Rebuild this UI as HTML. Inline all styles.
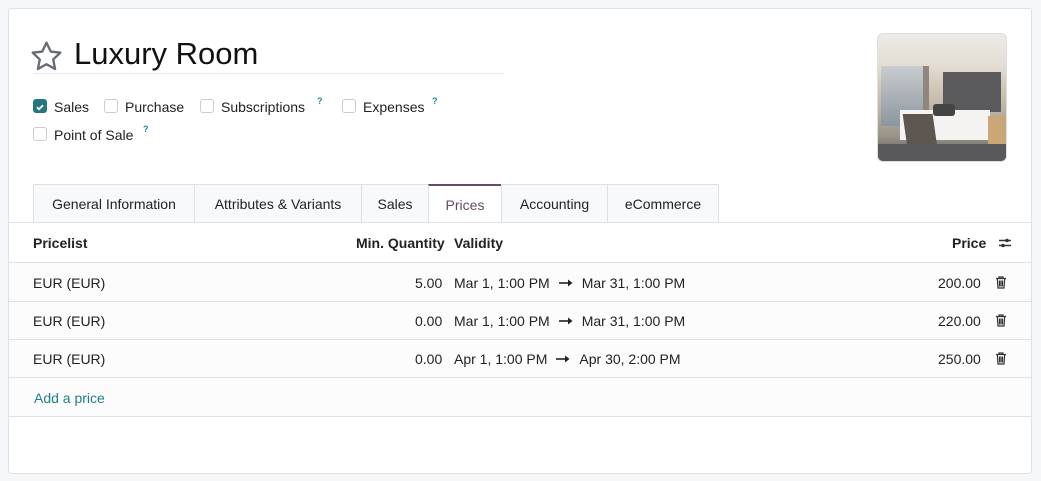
<!DOCTYPE html>
<html><head><style>
*{box-sizing:border-box;margin:0;padding:0}
body{width:1041px;height:481px;background:#f6f7f9;font-family:"Liberation Sans",sans-serif;font-size:14px;color:#212529;position:relative;overflow:hidden}
.card{position:absolute;left:8px;top:8px;width:1024px;height:466px;background:#fff;border:1px solid #dee2e6;border-radius:3px;overflow:hidden}
.in{position:absolute;left:-1px;top:-1px;width:1024px;height:466px}
.abs{position:absolute}
.title{left:66px;top:28px;font-size:31px;color:#111}
.uline{left:25px;top:65px;width:471px;height:1px;background:#e4e6ea}
.cb{position:absolute;width:14px;height:14px;border:1px solid #ccc;border-radius:3px;background:#fff}
.cb.on{background:#24787c;border-color:#24787c}
.lbl{position:absolute;font-size:14px;color:#222}
.q{position:absolute;font-size:9px;color:#1a8aa0;font-weight:bold}
.tabs{left:25px;top:176px;height:39px;width:686px}
.tab{position:absolute;top:0;height:39px;border:1px solid #dee2e6;border-right:none;background:#f8f9fa;font-size:14px;line-height:38px;text-align:center;color:#222}
.tab.act{background:#fff;border-top:2px solid #6b4b63;color:#6b4b63;border-bottom:1px solid #fff}
.hline{position:absolute;left:0;width:1024px;height:1px;background:#dee2e6}
.row{position:absolute;left:0;width:1024px;background:#fcfcfd}
.t{position:absolute;font-size:14px;color:#222}
.b{font-weight:bold}
.ar{display:inline-block;vertical-align:middle;margin:0 9px 2px 9px}
</style></head><body>
<div class="card"><div class="in">
<svg class="abs" style="left:21px;top:31px" width="35" height="35" viewBox="0 0 24 24"><path d="M12 2.5l2.9 6.1 6.6.8-4.9 4.6 1.3 6.6L12 17.3l-5.9 3.3 1.3-6.6-4.9-4.6 6.6-.8z" fill="none" stroke="#666b76" stroke-width="1.6" stroke-linejoin="round"/></svg>
<div class="abs title">Luxury Room</div>
<div class="abs uline"></div>

<div class="cb on" style="left:25px;top:91px"><svg width="12" height="12" viewBox="0 0 12 12"><path d="M3 6.2l2 2 4-4" stroke="#fff" stroke-width="1.8" fill="none"/></svg></div>
<div class="lbl" style="left:46px;top:91px">Sales</div>
<div class="cb" style="left:96px;top:91px"></div>
<div class="lbl" style="left:117px;top:91px">Purchase</div>
<div class="cb" style="left:192px;top:91px"></div>
<div class="lbl" style="left:213px;top:91px">Subscriptions</div>
<div class="q" style="left:309px;top:88px">?</div>
<div class="cb" style="left:334px;top:91px"></div>
<div class="lbl" style="left:355px;top:91px">Expenses</div>
<div class="q" style="left:424px;top:88px">?</div>
<div class="cb" style="left:25px;top:119px"></div>
<div class="lbl" style="left:46px;top:119px">Point of Sale</div>
<div class="q" style="left:135px;top:116px">?</div>

<div class="abs" style="left:869px;top:25px;width:130px;height:129px;border-radius:6px;overflow:hidden;border:1px solid #ddd;background:linear-gradient(180deg,#ecebe8 0%,#e3ddd3 25%,#cfc4b3 45%,#bdb3a5 60%,#9a9489 80%,#555 100%)">
 <div class="abs" style="left:3px;top:32px;width:42px;height:60px;background:linear-gradient(180deg,#c8ccd0,#8d969e)"></div>
 <div class="abs" style="left:45px;top:32px;width:6px;height:60px;background:#8f877c"></div>
 <div class="abs" style="left:65px;top:38px;width:58px;height:40px;background:#5a5a5c"></div>
 <div class="abs" style="left:22px;top:76px;width:90px;height:30px;background:#f4f3f1"></div>
 <div class="abs" style="left:55px;top:70px;width:22px;height:12px;background:#444;border-radius:3px"></div>
 <div class="abs" style="left:28px;top:80px;width:30px;height:48px;background:#5e5650;transform:skewX(8deg)"></div>
 <div class="abs" style="left:110px;top:82px;width:20px;height:30px;background:#c9a776"></div>
 <div class="abs" style="left:0;top:110px;width:130px;height:19px;background:#59585a"></div>
</div>

<div class="abs tabs">
 <div class="tab" style="left:0;width:161px">General Information</div>
 <div class="tab" style="left:161px;width:167px">Attributes &amp; Variants</div>
 <div class="tab" style="left:328px;width:67px">Sales</div>
 <div class="tab act" style="left:395px;width:73px">Prices</div>
 <div class="tab" style="left:468px;width:106px">Accounting</div>
 <div class="tab" style="left:574px;width:112px;border-right:1px solid #dee2e6">eCommerce</div>
</div>
<div class="hline" style="top:214px"></div>

<div class="t b" style="left:25px;top:227px">Pricelist</div>
<div class="t b" style="left:348px;top:227px">Min. Quantity</div>
<div class="t b" style="left:446px;top:227px">Validity</div>
<div class="t b" style="left:944px;top:227px">Price</div>
<svg class="abs" style="left:990px;top:228px" width="14" height="14" viewBox="0 0 14 14"><path d="M1 4.5h12M1 9.5h12" stroke="#333" stroke-width="1.4"/><circle cx="9" cy="4.5" r="1.8" fill="#333"/><circle cx="5" cy="9.5" r="1.8" fill="#333"/></svg>
<div class="hline" style="top:254px"></div>

<div class="row" style="top:255px;height:38px"></div>
<div class="row" style="top:294px;height:37px"></div>
<div class="row" style="top:332px;height:37px"></div>
<div class="row" style="top:370px;height:38px"></div>
<div class="hline" style="top:293px"></div>
<div class="hline" style="top:331px"></div>
<div class="hline" style="top:369px"></div>
<div class="hline" style="top:408px"></div>

<div class="t" style="left:25px;top:267px">EUR (EUR)</div>
<div class="t" style="left:407px;top:267px">5.00</div>
<div class="t" style="left:446px;top:267px">Mar 1, 1:00 PM<svg class="ar" width="14" height="8" viewBox="0 0 14 8"><path d="M0 4h10" stroke="#222" stroke-width="1.6"/><path d="M9 0.5l4.5 3.5L9 7.5z" fill="#222"/></svg>Mar 31, 1:00 PM</div>
<div class="t" style="left:930px;top:267px">200.00</div>

<div class="t" style="left:25px;top:305px">EUR (EUR)</div>
<div class="t" style="left:407px;top:305px">0.00</div>
<div class="t" style="left:446px;top:305px">Mar 1, 1:00 PM<svg class="ar" width="14" height="8" viewBox="0 0 14 8"><path d="M0 4h10" stroke="#222" stroke-width="1.6"/><path d="M9 0.5l4.5 3.5L9 7.5z" fill="#222"/></svg>Mar 31, 1:00 PM</div>
<div class="t" style="left:930px;top:305px">220.00</div>

<div class="t" style="left:25px;top:343px">EUR (EUR)</div>
<div class="t" style="left:407px;top:343px">0.00</div>
<div class="t" style="left:446px;top:343px">Apr 1, 1:00 PM<svg class="ar" width="14" height="8" viewBox="0 0 14 8"><path d="M0 4h10" stroke="#222" stroke-width="1.6"/><path d="M9 0.5l4.5 3.5L9 7.5z" fill="#222"/></svg>Apr 30, 2:00 PM</div>
<div class="t" style="left:930px;top:343px">250.00</div>

<svg class="abs" style="left:987px;top:268px" width="12" height="13" viewBox="0 0 12 13"><path d="M1 2.5h10M4 2.5V1h4v1.5M2.3 2.5l.7 9.5h6l.7-9.5M4.5 4.5v6M6 4.5v6M7.5 4.5v6" stroke="#333" stroke-width="1.2" fill="none"/></svg>
<svg class="abs" style="left:987px;top:306px" width="12" height="13" viewBox="0 0 12 13"><path d="M1 2.5h10M4 2.5V1h4v1.5M2.3 2.5l.7 9.5h6l.7-9.5M4.5 4.5v6M6 4.5v6M7.5 4.5v6" stroke="#333" stroke-width="1.2" fill="none"/></svg>
<svg class="abs" style="left:987px;top:344px" width="12" height="13" viewBox="0 0 12 13"><path d="M1 2.5h10M4 2.5V1h4v1.5M2.3 2.5l.7 9.5h6l.7-9.5M4.5 4.5v6M6 4.5v6M7.5 4.5v6" stroke="#333" stroke-width="1.2" fill="none"/></svg>

<div class="t" style="left:26px;top:382px;color:#1f7f86">Add a price</div>
</div></div>
</body></html>
